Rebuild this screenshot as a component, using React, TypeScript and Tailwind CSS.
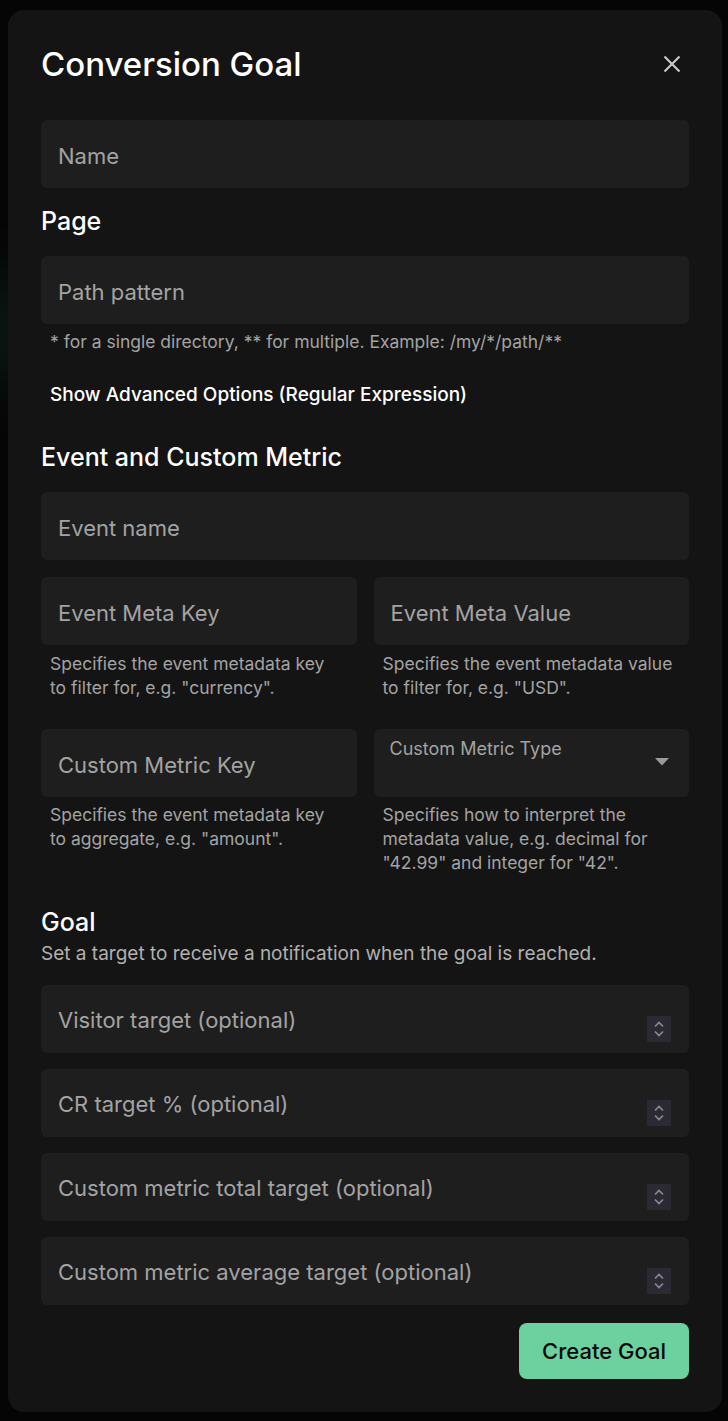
import React from 'react';

const inputCls =
  "w-full h-[68px] rounded-md bg-[#1e1e1e] px-[17px] pt-[3px] text-[22px] text-white placeholder:text-[#a3a3a3] outline-none";

const TextField = ({ placeholder }: { placeholder: string }) => (
  <input type="text" placeholder={placeholder} className={inputCls} />
);

const NumberField = ({ placeholder }: { placeholder: string }) => (
  <div className="flex h-[68px] w-full rounded-md bg-[#1e1e1e]">
    <input
      type="text"
      placeholder={placeholder}
      className="min-w-0 flex-1 bg-transparent px-[17px] pt-[3px] text-[22px] text-white placeholder:text-[#a3a3a3] outline-none"
    />
    {/* spinner */}
    <div className="mr-[18px] mb-[11px] flex h-[26px] w-[24px] flex-col items-center justify-center self-end bg-[#2b2a33]">
      <svg width="12" height="20" viewBox="0 0 12 20" fill="none" stroke="#8c8a99" strokeWidth="1.6">
        <path d="M2 7.5 L6 3.5 L10 7.5" />
        <path d="M2 12.5 L6 16.5 L10 12.5" />
      </svg>
    </div>
  </div>
);

const Help = ({ children }: { children: React.ReactNode }) => (
  <p className="whitespace-nowrap px-[9px] text-[17.5px] leading-[24px] text-[#a3a3a3]">{children}</p>
);

const Heading = ({ children }: { children: React.ReactNode }) => (
  <h2 className="text-[25px] font-medium leading-[28px] text-white">{children}</h2>
);

export default function App() {
  return (
    <div className="relative min-h-screen overflow-hidden bg-[#050505] pl-[8px] pr-[6px] pt-[10px] pb-[9px] font-['Inter',sans-serif]">
      {/* faint backdrop glow */}
      <div className="absolute left-[-40px] top-[290px] h-[80px] w-[60px] rounded-full bg-[#1d4a35] opacity-70 blur-2xl" />

      <div className="relative flex flex-col rounded-2xl bg-[#141414] px-[33px] pt-[36px] pb-[33px]">
        {/* Header */}
        <div className="flex h-[36px] items-center justify-between">
          <h1 className="text-[33px] font-medium leading-[36px] text-white">Conversion Goal</h1>
          <svg width="18" height="18" viewBox="0 0 18 18" fill="none" stroke="#c8c8c8" strokeWidth="2.2" className="mr-[8px]">
            <path d="M1.5 1.5 L16.5 16.5 M16.5 1.5 L1.5 16.5" />
          </svg>
        </div>

        <div className="mt-[38px]">
          <TextField placeholder="Name" />
        </div>

        {/* Page */}
        <div className="mt-[19px]">
          <Heading>Page</Heading>
        </div>
        <div className="mt-[21px]">
          <TextField placeholder="Path pattern" />
        </div>
        <p className="mt-[8px] px-[9px] text-[17.5px] leading-[20px] text-[#a3a3a3]">
          * for a single directory, ** for multiple. Example: /my/*/path/**
        </p>
        <button className="mt-[31px] self-start px-[9px] text-left text-[19px] font-medium leading-[24px] text-white">
          Show Advanced Options (Regular Expression)
        </button>

        {/* Event and Custom Metric */}
        <div className="mt-[36px]">
          <Heading>Event and Custom Metric</Heading>
        </div>
        <div className="mt-[21px]">
          <TextField placeholder="Event name" />
        </div>

        <div className="mt-[17px] grid grid-cols-2 gap-x-[17px]">
          <div>
            <TextField placeholder="Event Meta Key" />
            <div className="mt-[7px]">
              <Help>
                Specifies the event metadata key
                <br />
                to filter for, e.g. "currency".
              </Help>
            </div>
          </div>
          <div>
            <TextField placeholder="Event Meta Value" />
            <div className="mt-[7px]">
              <Help>
                Specifies the event metadata value
                <br />
                to filter for, e.g. "USD".
              </Help>
            </div>
          </div>
        </div>

        <div className="mt-[29px] grid grid-cols-2 gap-x-[17px]">
          <div>
            <TextField placeholder="Custom Metric Key" />
            <div className="mt-[6px]">
              <Help>
                Specifies the event metadata key
                <br />
                to aggregate, e.g. "amount".
              </Help>
            </div>
          </div>
          <div>
            <div className="flex h-[68px] justify-between rounded-md bg-[#1e1e1e] pl-[16px] pr-[20px]">
              <span className="pt-[10px] text-[18px] leading-[20px] text-[#a3a3a3]">Custom Metric Type</span>
              <svg width="14" height="8" viewBox="0 0 14 8" className="mt-[29px]">
                <path d="M0 0 L14 0 L7 7.5 Z" fill="#9a9a9a" />
              </svg>
            </div>
            <div className="mt-[6px]">
              <Help>
                Specifies how to interpret the
                <br />
                metadata value, e.g. decimal for
                <br />
                "42.99" and integer for "42".
              </Help>
            </div>
          </div>
        </div>

        {/* Goal */}
        <div className="mt-[33px]">
          <Heading>Goal</Heading>
        </div>
        <p className="mt-[6px] text-[19px] leading-[24px] text-[#b0b0b0]">
          Set a target to receive a notification when the goal is reached.
        </p>
        <div className="mt-[19px] flex flex-col gap-[16px]">
          <NumberField placeholder="Visitor target (optional)" />
          <NumberField placeholder="CR target % (optional)" />
          <NumberField placeholder="Custom metric total target (optional)" />
          <NumberField placeholder="Custom metric average target (optional)" />
        </div>

        <div className="mt-[18px] flex justify-end">
          <button className="h-[56px] w-[170px] rounded-lg bg-[#6dd09f] text-[22px] font-medium text-[#0a0a0a]">
            Create Goal
          </button>
        </div>
      </div>
    </div>
  );
}
